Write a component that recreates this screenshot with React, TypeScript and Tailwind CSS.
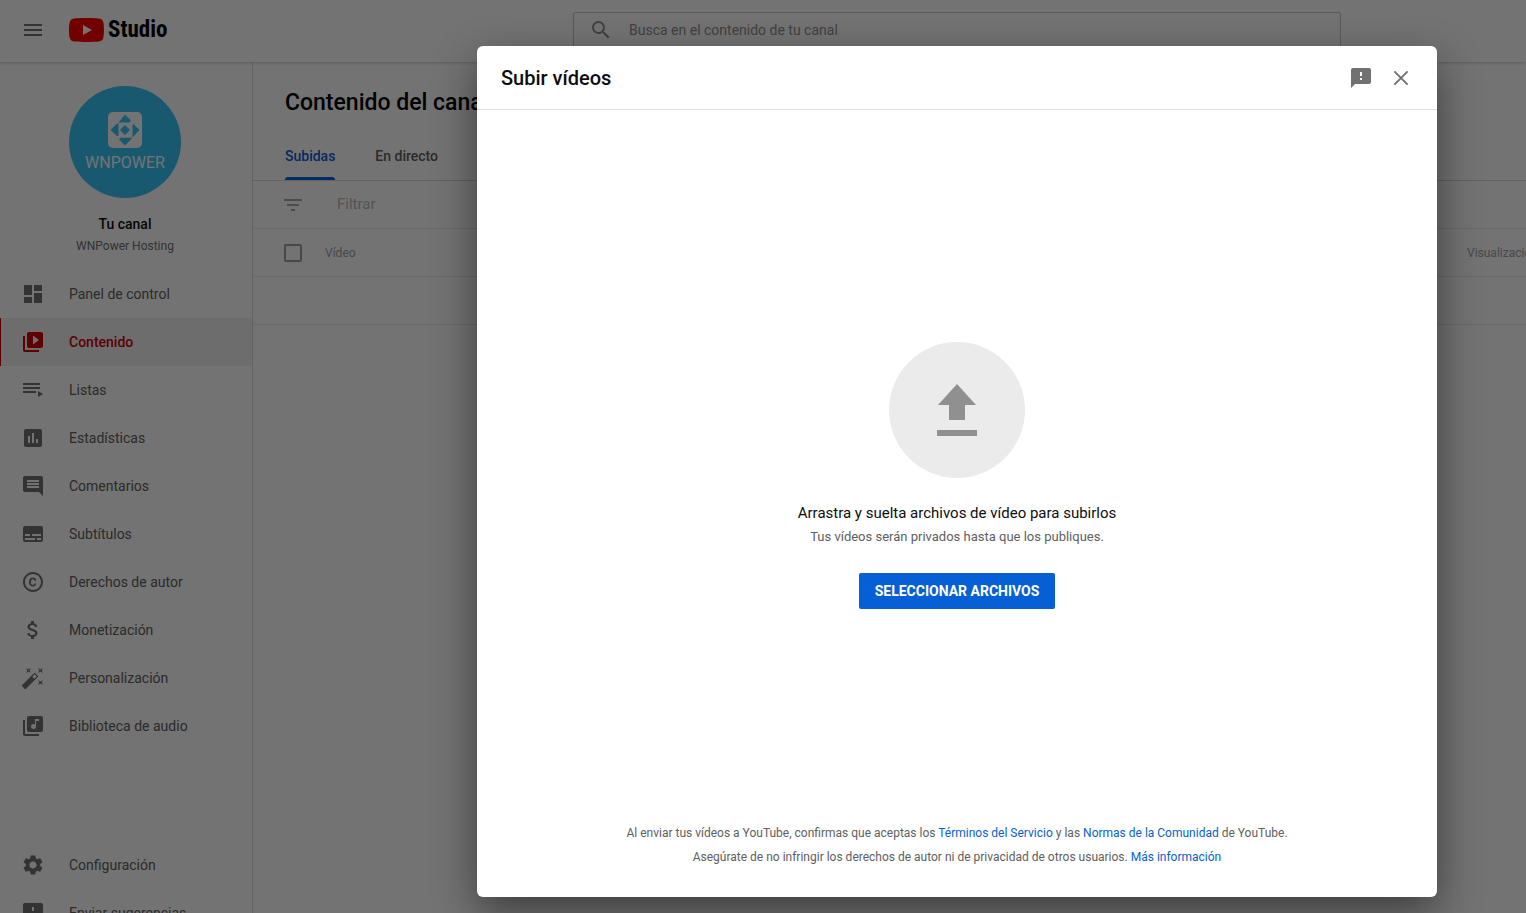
import type { ReactNode } from "react";
import {
  MdAttachMoney,
  MdAutoFixHigh,
  MdComment,
  MdCopyright,
  MdDashboard,
  MdFeedback,
  MdFilterList,
  MdInsertChart,
  MdLibraryMusic,
  MdMenu,
  MdSearch,
  MdSettings,
  MdVideoLibrary,
} from "react-icons/md";

function PlaylistIcon() {
  return (
    <svg viewBox="0 0 24 24" className="size-6" fill="currentColor" aria-hidden="true">
      <path d="M2 5h17v2H2zM2 9h17v2H2zM2 13h13v2H2zM17 13v6l5-3z" />
    </svg>
  );
}

function SubtitlesIcon() {
  return (
    <svg viewBox="0 0 24 24" className="size-6" fill="currentColor" fillRule="evenodd" aria-hidden="true">
      <path d="M4 4h16a2 2 0 0 1 2 2v12a2 2 0 0 1-2 2H4a2 2 0 0 1-2-2V6a2 2 0 0 1 2-2zM4 12v2h5v-2zM11 12v2h9v-2zM4 16v2h10v-2zM16 16v2h4v-2z" />
    </svg>
  );
}

function CloseIcon() {
  return (
    <svg viewBox="0 0 24 24" className="size-6" fill="none" stroke="currentColor" strokeWidth="1.9" aria-hidden="true">
      <path d="M5.4 5.4l13.2 13.2M18.6 5.4L5.4 18.6" />
    </svg>
  );
}

function Logo() {
  return (
    <a href="#inicio" className="flex items-center gap-1 text-black" aria-label="Studio">
      <svg viewBox="0 0 35 24" className="h-6 w-[35px]" aria-hidden="true">
        <path
          fill="#ff0000"
          d="M34.2 3.8A4.4 4.4 0 0 0 31.1.7C28.4 0 17.5 0 17.5 0S6.6 0 3.9.7A4.4 4.4 0 0 0 .8 3.800C0 6.500 0 12 0 12s0 5.500.8 8.200a4.400 4.400 0 0 0 3.100 3.100C6.600 24 17.500 24 17.500 24s10.900 0 13.600-.7a4.400 4.400 0 0 0 3.100-3.100C35 17.500 35 12 35 12s0-5.500-.8-8.200z"
        />
        <path fill="#fff" d="M14 7v10l9-5z" />
      </svg>
      <span className="font-['Roboto_Condensed','Open_Sans_Condensed','Roboto',sans-serif] text-[23px] leading-8 font-bold">
        Studio
      </span>
    </a>
  );
}

function Avatar() {
  return (
    <div className="flex size-28 flex-col items-center rounded-full bg-[#38c6f8] pt-[26px] text-white">
      <svg viewBox="0 0 34 36" className="h-9 w-[34px]" aria-hidden="true">
        <rect width="34" height="36" rx="5" fill="#fff" />
        <g fill="#38c6f8">
          <path d="M17 13l5 5-5 5-5-5z" />
          <path d="M17 2.500l6 6-1.500 2H10.500z" />
          <path d="M2.500 18L9 11.500h1.500V24H9z" />
          <path d="M31.500 18L26 12.500h-1.500V25.500z" />
          <path d="M17 33.500l-6-6 1.500-1.800h12z" />
        </g>
      </svg>
      <span className="mt-[3px] text-base leading-6">WNPOWER</span>
    </div>
  );
}

type NavEntry = { label: string; icon: ReactNode; active?: boolean };

const mainNav: NavEntry[] = [
  { label: "Panel de control", icon: <MdDashboard size={24} /> },
  { label: "Contenido", icon: <MdVideoLibrary size={24} />, active: true },
  { label: "Listas", icon: <PlaylistIcon /> },
  { label: "Estadísticas", icon: <MdInsertChart size={24} /> },
  { label: "Comentarios", icon: <MdComment size={24} /> },
  { label: "Subtítulos", icon: <SubtitlesIcon /> },
  { label: "Derechos de autor", icon: <MdCopyright size={24} /> },
  { label: "Monetización", icon: <MdAttachMoney size={24} /> },
  { label: "Personalización", icon: <MdAutoFixHigh size={24} /> },
  { label: "Biblioteca de audio", icon: <MdLibraryMusic size={24} /> },
];

const footerNav: NavEntry[] = [
  { label: "Configuración", icon: <MdSettings size={24} /> },
  { label: "Enviar sugerencias", icon: <MdFeedback size={24} /> },
];

function NavList({ items }: { items: NavEntry[] }) {
  return (
    <ul>
      {items.map(({ label, icon, active }) => (
        <li key={label}>
          <a
            href="#"
            aria-current={active ? "page" : undefined}
            className={
              active
                ? "flex h-12 items-center gap-6 border-l border-[#cc0000] bg-[#f2f2f2] pl-5 text-[#cc0000]"
                : "flex h-12 items-center gap-6 border-l border-transparent pl-5 text-[#717171]"
            }
          >
            {icon}
            <span className={active ? "text-sm font-medium" : "text-sm text-[#606060]"}>{label}</span>
          </a>
        </li>
      ))}
    </ul>
  );
}

function Header() {
  return (
    <header className="relative flex h-[62px] shrink-0 items-start bg-white pl-[21px] shadow-[0_1px_3px_rgba(0,0,0,0.2)]">
      <button type="button" aria-label="Menú" className="mt-[18px] mr-6 text-[#717171]">
        <MdMenu size={24} />
      </button>
      <div className="flex h-[60px] items-center">
        <Logo />
      </div>
      <label className="mt-3 mr-[185px] ml-auto flex h-10 w-full max-w-[768px] items-center gap-4 rounded-xs border border-[#c8c8c8] pb-1 pl-[15px] text-[#909090]">
        <MdSearch size={24} aria-hidden="true" />
        <input
          type="text"
          aria-label="Buscar"
          placeholder="Busca en el contenido de tu canal"
          className="min-w-0 flex-1 text-sm outline-none placeholder:text-[#909090]"
        />
      </label>
    </header>
  );
}

function Sidebar() {
  return (
    <nav className="w-[253px] shrink-0 border-r border-[#dadada] pt-6">
      <div className="mb-4 flex flex-col items-center pr-[2px]">
        <Avatar />
        <p className="mt-4 text-sm leading-5 font-medium text-[#0d0d0d]">Tu canal</p>
        <p className="mt-1 text-xs leading-4 text-[#707070]">WNPower Hosting</p>
      </div>
      <NavList items={mainNav} />
      <div className="mt-[91px]">
        <NavList items={footerNav} />
      </div>
    </nav>
  );
}

function Content() {
  return (
    <main className="min-w-0 flex-1 overflow-hidden">
      <h1 className="px-8 pt-[25px] text-[23px] leading-8 font-medium whitespace-nowrap text-black">Contenido del canal</h1>
      <div role="tablist" className="mt-[13px] flex h-[49px] gap-10 border-b border-[#dadada] px-8 text-sm font-medium">
        <button type="button" role="tab" aria-selected="true" className="flex flex-col text-[#065fd4]">
          <span className="flex flex-1 items-center pt-[3px]">Subidas</span>
          <span className="h-[3px] w-full rounded-t-sm bg-[#065fd4]" />
        </button>
        <button type="button" role="tab" aria-selected="false" className="flex flex-col text-[#606060]">
          <span className="flex flex-1 items-center pt-[3px]">En directo</span>
          <span className="h-[3px]" />
        </button>
      </div>
      <label className="flex h-12 items-center gap-8 border-b border-[#e6e6e6] pl-7 text-[#a8a8a8]">
        <MdFilterList size={24} aria-hidden="true" />
        <input
          type="text"
          aria-label="Filtrar"
          placeholder="Filtrar"
          className="min-w-0 flex-1 text-[15px] outline-none placeholder:text-[#b8b8b8]"
        />
      </label>
      <table className="w-full table-fixed border-separate border-spacing-0 text-left text-xs text-[#a0a0a0]">
        <thead>
          <tr>
            <th className="h-12 w-[72px] border-b border-[#e6e6e6] pl-[31px] font-normal">
              <input
                type="checkbox"
                aria-label="Seleccionar todo"
                className="block size-[18px] appearance-none rounded-xs border-2 border-[#a0a0a0]"
              />
            </th>
            <th className="border-b border-[#e6e6e6] font-normal">Vídeo</th>
            <th className="w-[59px] border-b border-[#e6e6e6] font-normal whitespace-nowrap">Visualizaciones</th>
          </tr>
        </thead>
        <tbody>
          <tr>
            <td colSpan={3} className="h-12 border-b border-[#e6e6e6]" />
          </tr>
        </tbody>
      </table>
    </main>
  );
}

function UploadDialog() {
  return (
    <div className="absolute inset-0 flex justify-end bg-black/55 pt-[46px] pr-[89px] pb-4">
      <section
        role="dialog"
        aria-modal="true"
        aria-labelledby="upload-title"
        className="flex h-full w-full max-w-[960px] flex-col rounded-md bg-white shadow-[0_16px_44px_rgba(0,0,0,0.47)]"
      >
        <div className="flex h-16 shrink-0 items-center border-b border-[#e0e0e0] px-6">
          <h2 id="upload-title" className="text-xl font-medium text-[#0d0d0d]">
            Subir vídeos
          </h2>
          <div className="ml-auto flex gap-4 text-[#717171]">
            <button type="button" aria-label="Enviar sugerencias">
              <MdFeedback size={24} />
            </button>
            <button type="button" aria-label="Cerrar">
              <CloseIcon />
            </button>
          </div>
        </div>
        <div className="flex flex-1 flex-col items-center justify-center pt-[19px]">
          <div className="flex size-[136px] items-center justify-center rounded-full bg-[#ebebeb]">
            <svg viewBox="0 0 40 52" className="h-[52px] w-10" fill="#909090" aria-hidden="true">
              <path d="M20 0l19 21H28v15H12V21H1zM0 46h40v6H0z" />
            </svg>
          </div>
          <p className="mt-[23px] text-[15px] leading-6 text-[#0d0d0d]">Arrastra y suelta archivos de vídeo para subirlos</p>
          <p className="text-[13px] leading-6 text-[#606060]">Tus vídeos serán privados hasta que los publiques.</p>
          <button type="button" className="mt-6 h-9 rounded-xs bg-[#065fd4] px-4 text-sm font-bold text-white uppercase">
            Seleccionar archivos
          </button>
        </div>
        <div className="pb-7 text-center text-xs leading-6 text-[#606060]">
          <p>
            Al enviar tus vídeos a YouTube, confirmas que aceptas los{" "}
            <a href="#terminos" className="text-[#065fd4]">Términos del Servicio</a> y las{" "}
            <a href="#normas" className="text-[#065fd4]">Normas de la Comunidad</a> de YouTube.
          </p>
          <p>
            Asegúrate de no infringir los derechos de autor ni de privacidad de otros usuarios.{" "}
            <a href="#informacion" className="text-[#065fd4]">Más información</a>
          </p>
        </div>
      </section>
    </div>
  );
}

export default function App() {
  return (
    <div className="relative flex h-screen flex-col overflow-hidden bg-white font-['Roboto',sans-serif]">
      <Header />
      <div className="flex min-h-0 flex-1">
        <Sidebar />
        <Content />
      </div>
      <UploadDialog />
    </div>
  );
}
